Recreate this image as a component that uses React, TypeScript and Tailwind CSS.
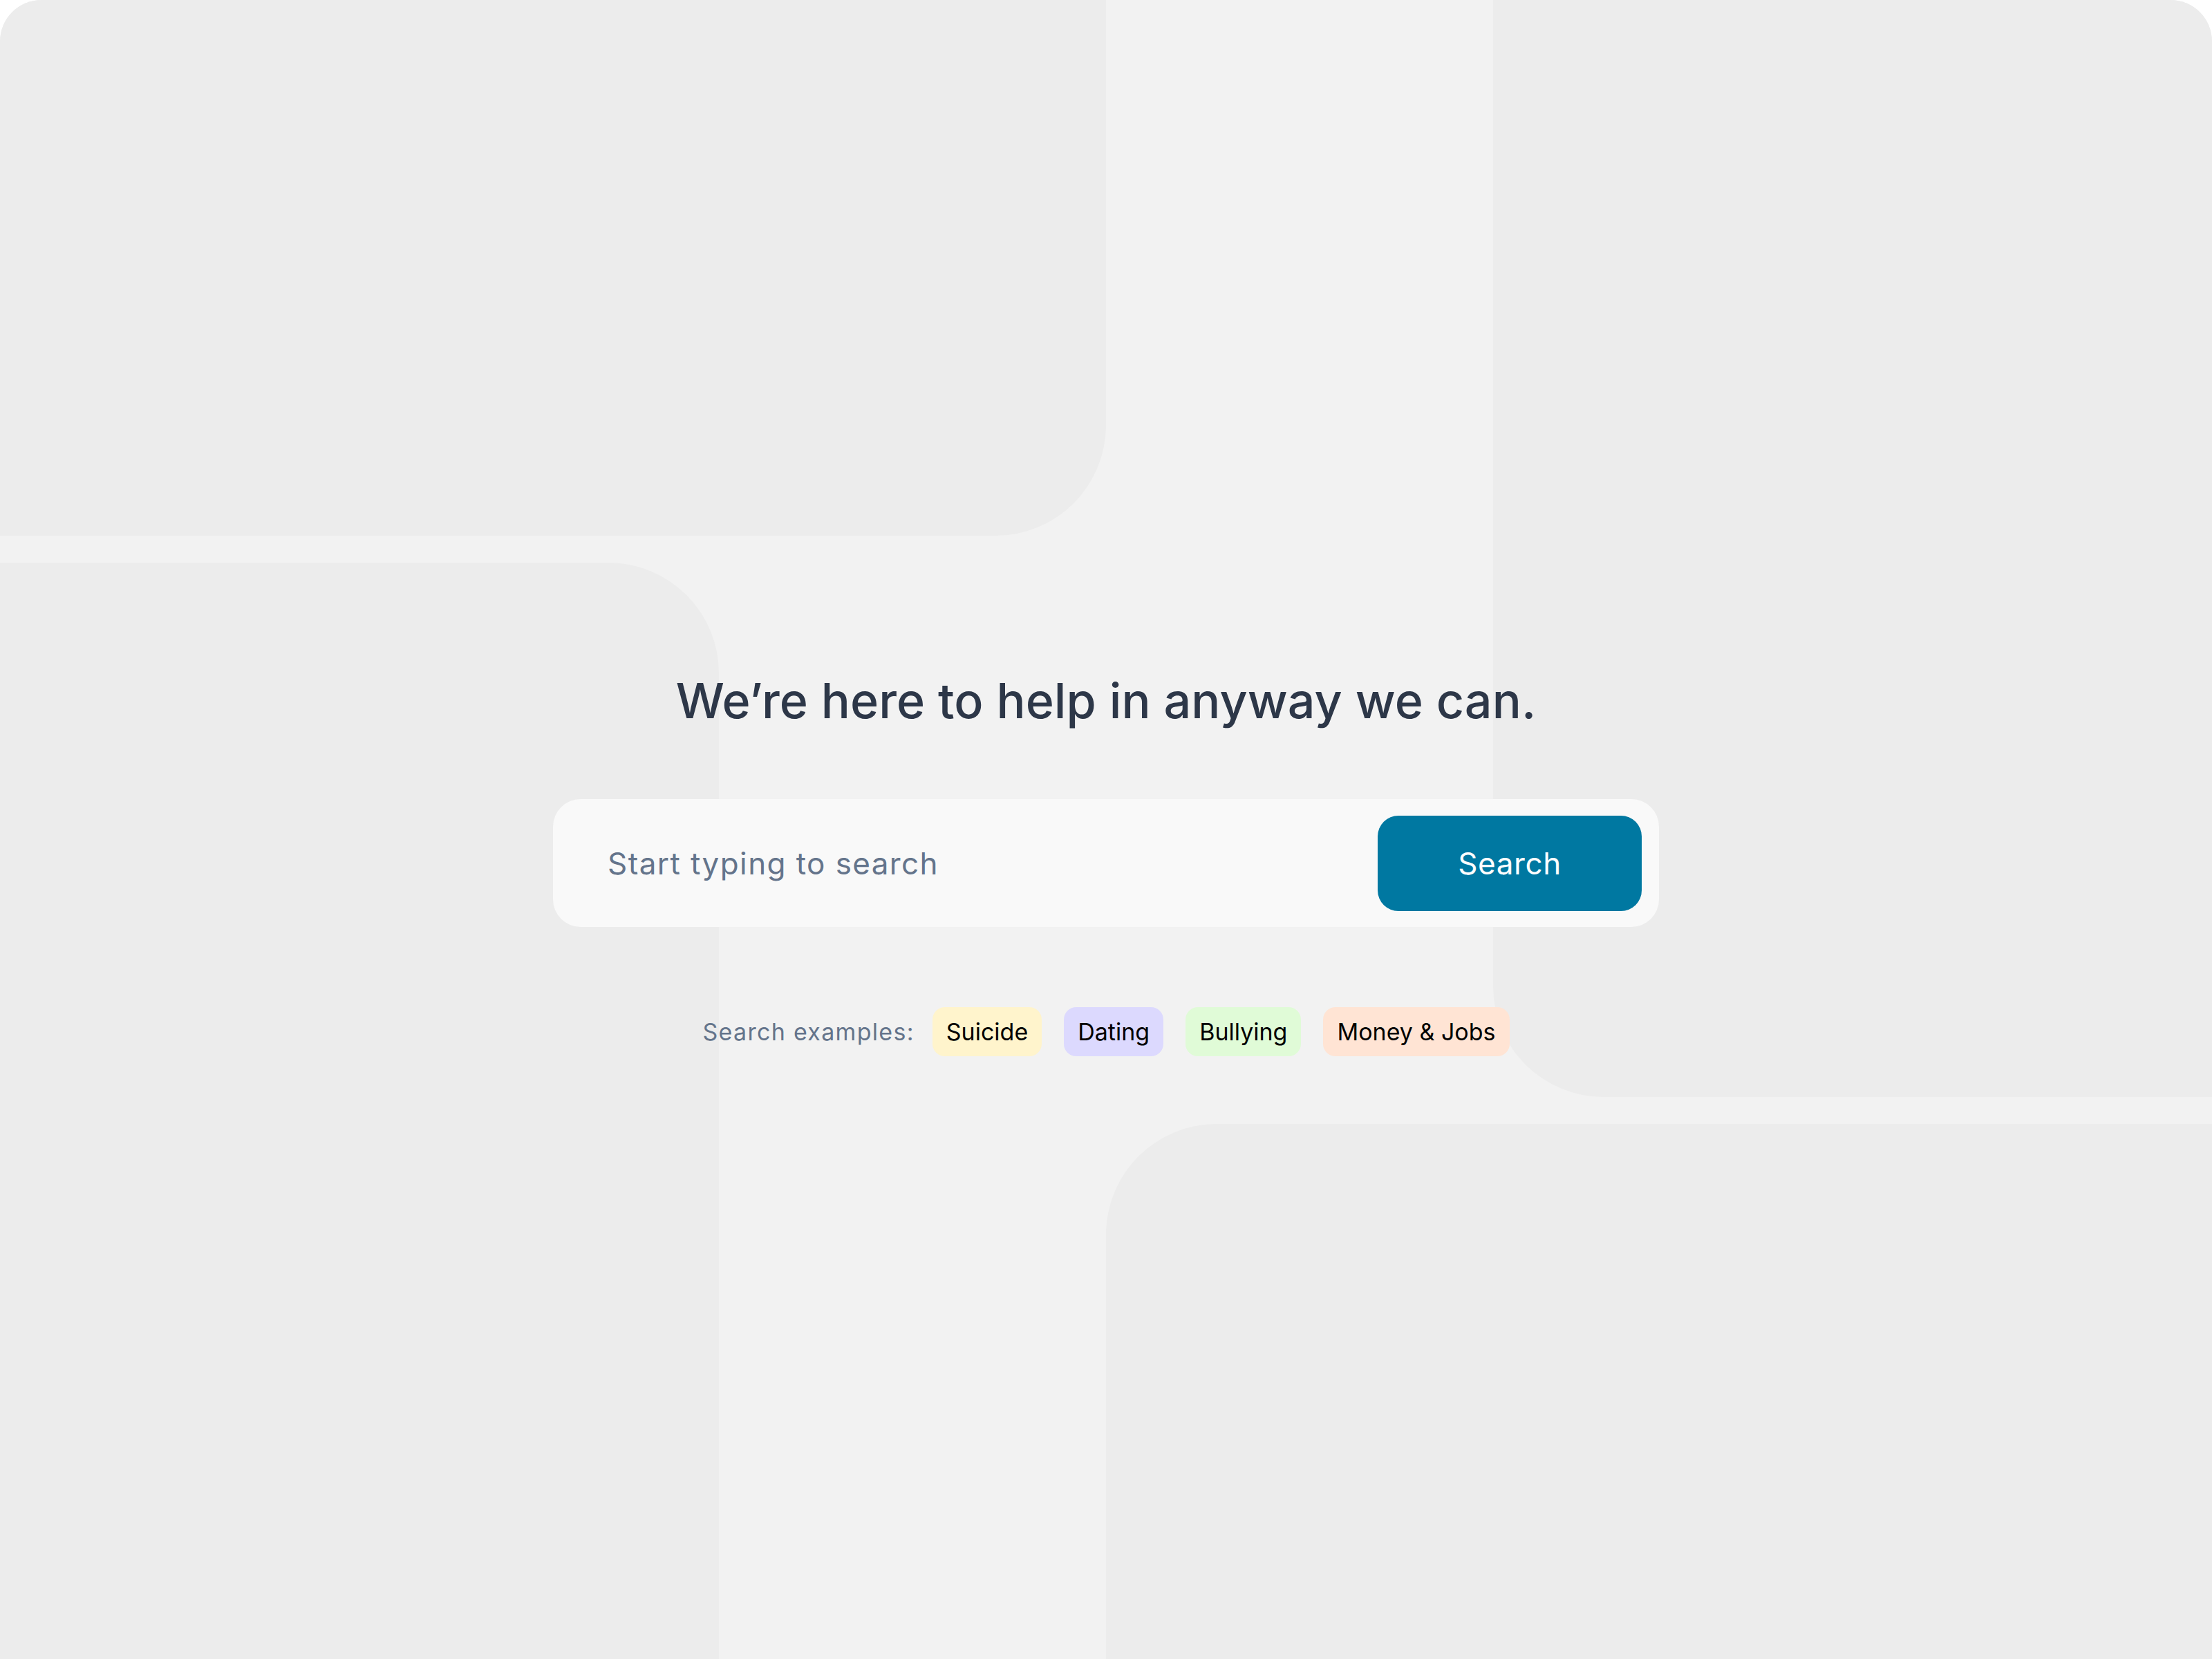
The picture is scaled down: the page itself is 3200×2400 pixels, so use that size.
import React from "react";

const tags = [
  { label: "Suicide", cls: "bg-[#fff4cc]" },
  { label: "Dating", cls: "bg-[#dcd9fe]" },
  { label: "Bullying", cls: "bg-[#e0fbd7]" },
  { label: "Money & Jobs", cls: "bg-[#ffe4d4]" },
];

export default function App() {
  return (
    <div className="bg-white w-[3200px] h-[2400px]" style={{ fontFamily: "Inter, 'Noto Sans', sans-serif" }}>
      <div className="w-[3200px] h-[2400px] rounded-t-[60px] overflow-hidden bg-[#f2f2f2] grid grid-cols-[1040px_560px_560px_1040px] grid-rows-[775px_39px_773px_39px_774px]">
        {/* decorative blocks */}
        <div className="col-start-1 col-end-3 row-start-1 row-end-2 bg-[#ececec] rounded-br-[160px]" />
        <div className="col-start-4 col-end-5 row-start-1 row-end-4 bg-[#ececec] rounded-bl-[160px]" />
        <div className="col-start-1 col-end-2 row-start-3 row-end-6 bg-[#ececec] rounded-tr-[160px]" />
        <div className="col-start-3 col-end-5 row-start-5 row-end-6 bg-[#ececec] rounded-tl-[160px]" />

        {/* content */}
        <div className="col-start-1 col-end-5 row-start-1 row-end-6 flex flex-col items-center pt-[979px]">
          <h1 className="text-[70px] leading-none font-medium text-[#2d3748] tracking-[0.1px]">
            We’re here to help in anyway we can.
          </h1>
          <div className="mt-[107px] w-[1600px] h-[185px] bg-[#f9f9f9] rounded-[40px] flex items-center pl-[79px] pr-[25px]">
            <input
              className="flex-1 bg-transparent outline-none text-[44px] tracking-[1.4px] text-[#2d3748] placeholder:text-[#64748b]"
              placeholder="Start typing to search"
            />
            <button className="w-[382px] h-[138px] rounded-[30px] bg-[#0078a1] text-white text-[44px] tracking-[0.6px] flex items-center justify-center">
              Search
            </button>
          </div>
          <div className="mt-[116px] flex items-center">
            <span className="text-[34px] tracking-[1.3px] text-[#64748b] mr-[26px]">Search examples:</span>
            <div className="flex gap-[32px]">
              {tags.map((t) => (
                <span
                  key={t.label}
                  className={`${t.cls} h-[71px] px-[20px] rounded-[18px] flex items-center text-[34px] text-black`}
                >
                  {t.label}
                </span>
              ))}
            </div>
          </div>
        </div>
      </div>
    </div>
  );
}
